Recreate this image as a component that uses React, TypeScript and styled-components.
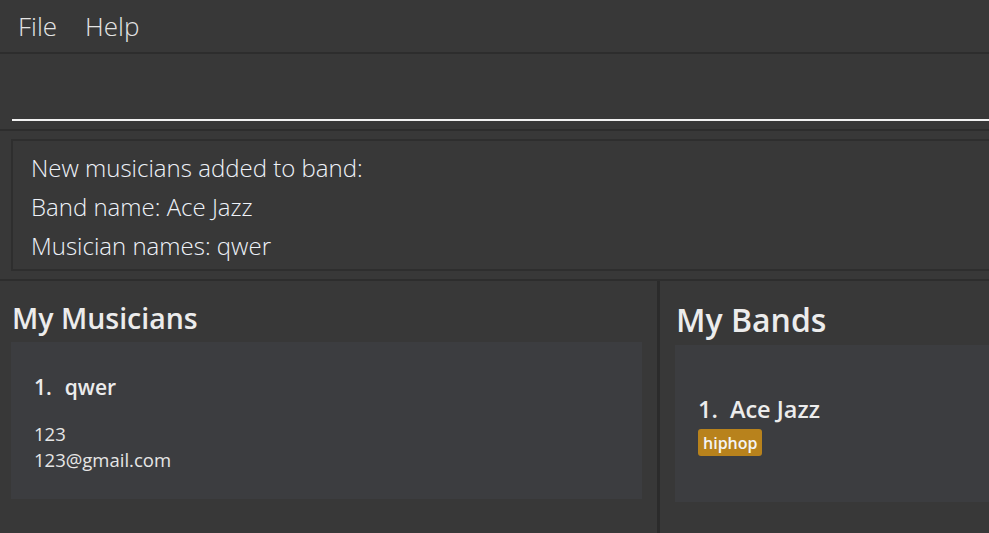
import React from "react";
import styled, { createGlobalStyle } from "styled-components";

const Global = createGlobalStyle`
  html, body { margin: 0; padding: 0; background: #383838; }
  body { font-family: "Open Sans", "Noto Sans", sans-serif; }
`;

const Root = styled.div`
  width: 989px;
  height: 533px;
  background: #383838;
  display: flex;
  flex-direction: column;
  overflow: hidden;
  color: #ececec;
`;

const MenuBar = styled.div`
  height: 54px;
  box-sizing: border-box;
  display: flex;
  align-items: center;
  gap: 28px;
  padding-left: 18px;
  padding-top: 1px;
  padding-bottom: 2px;
  border-bottom: 2px solid #2d2d2d;
  flex-shrink: 0;
`;

const MenuItem = styled.span`
  font-size: 26px;
  font-weight: 300;
  color: #e4e4e4;
`;

const CommandArea = styled.div`
  height: 77px;
  padding-left: 12px;
  display: flex;
  flex-direction: column;
  justify-content: flex-end;
  padding-bottom: 8px;
  box-sizing: border-box;
  border-bottom: 2px solid #2d2d2d;
  flex-shrink: 0;
`;

const CommandInput = styled.div`
  height: 2px;
  background: #f2f2f2;
`;

const ResultWrap = styled.div`
  padding: 8px 0 8px 11px;
  border-bottom: 2px solid #2d2d2d;
  flex-shrink: 0;
`;

const ResultBox = styled.div`
  height: 132px;
  box-sizing: border-box;
  border: 2px solid #2e2e2e;
  border-right: none;
  padding: 7px 0 0 18px;
  display: flex;
  flex-direction: column;
`;

const ResultLine = styled.div`
  font-size: 24px;
  font-weight: 300;
  line-height: 39px;
  color: #eef2f8;
`;

const Panels = styled.div`
  flex: 1;
  display: grid;
  grid-template-columns: 657px 3px 1fr;
`;

const Divider = styled.div`
  background: #2b2b2b;
`;

const Panel = styled.div<{ $pad: number }>`
  padding-left: ${(p) => p.$pad}px;
  display: flex;
  flex-direction: column;
`;

const PanelTitle = styled.div<{ $size: number; $lh: number }>`
  font-size: ${(p) => p.$size}px;
  line-height: ${(p) => p.$lh}px;
  font-weight: 600;
  color: #ececec;
  margin-top: 20px;
  margin-left: 1px;
`;

const Card = styled.div<{ $right: number; $top: number; $padTop: number }>`
  background: #3c3d40;
  height: 157px;
  margin-right: ${(p) => p.$right}px;
  margin-top: ${(p) => p.$top}px;
  padding: ${(p) => p.$padTop}px 23px 0;
  box-sizing: border-box;
  display: flex;
  flex-direction: column;
`;

const CardName = styled.div<{ $size: number; $lh: number; $gap: number }>`
  font-size: ${(p) => p.$size}px;
  line-height: ${(p) => p.$lh}px;
  font-weight: 600;
  color: #ececec;
  display: flex;
  gap: ${(p) => p.$gap}px;
`;

const Details = styled.div`
  margin-top: 20px;
  display: flex;
  flex-direction: column;
`;

const Detail = styled.div`
  font-size: 18.5px;
  line-height: 26px;
  color: #e6e6e6;
`;

const Tags = styled.div`
  display: flex;
  margin-top: 5px;
`;

const Tag = styled.span`
  background: #b8821c;
  color: #f4f4f4;
  font-size: 16px;
  font-weight: 600;
  padding: 3px 5px 2px;
  border-radius: 3px;
  line-height: 22px;
`;

export default function App() {
  return (
    <>
      <Global />
      <Root>
        <MenuBar>
          <MenuItem>File</MenuItem>
          <MenuItem>Help</MenuItem>
        </MenuBar>
        <CommandArea>
          <CommandInput />
        </CommandArea>
        <ResultWrap>
          <ResultBox>
            <ResultLine>New musicians added to band:</ResultLine>
            <ResultLine>Band name: Ace Jazz</ResultLine>
            <ResultLine>Musician names: qwer</ResultLine>
          </ResultBox>
        </ResultWrap>
        <Panels>
          <Panel $pad={11}>
            <PanelTitle $size={28.5} $lh={34}>My Musicians</PanelTitle>
            <Card $right={15} $top={7} $padTop={31}>
              <CardName $size={21} $lh={28} $gap={13}>
                <span>1.</span>
                <span>qwer</span>
              </CardName>
              <Details>
                <Detail>123</Detail>
                <Detail>123@gmail.com</Detail>
              </Details>
            </Card>
          </Panel>
          <Divider />
          <Panel $pad={15}>
            <PanelTitle $size={32} $lh={38}>My Bands</PanelTitle>
            <Card $right={0} $top={6} $padTop={49}>
              <CardName $size={23.5} $lh={30} $gap={12}>
                <span>1.</span>
                <span>Ace Jazz</span>
              </CardName>
              <Tags>
                <Tag>hiphop</Tag>
              </Tags>
            </Card>
          </Panel>
        </Panels>
      </Root>
    </>
  );
}
